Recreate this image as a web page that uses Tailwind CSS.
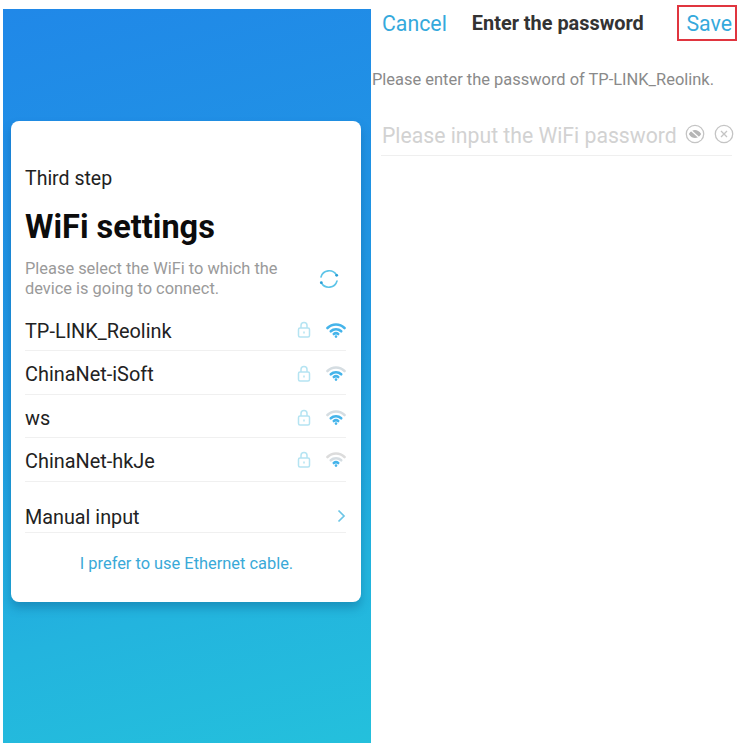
<!DOCTYPE html>
<html lang="en">
<head>
  <meta charset="UTF-8" />
  <meta name="viewport" content="width=device-width, initial-scale=1.0"/>
  <title>WiFi settings</title>
  <script src="https://cdn.jsdelivr.net/npm/@tailwindcss/browser@4"></script>
</head>
<body class="bg-white w-[743px] h-[746px] overflow-hidden font-['Roboto',sans-serif]">
  <div class="flex h-full">
    <!-- left phone -->
    <div class="ml-[3px] mt-[9px] mb-[3px] w-[368px] bg-[linear-gradient(165deg,#2088e8_0%,#2199e2_48%,#23b4de_78%,#24c0dc_100%)] pt-[112px] pl-[8px] pr-[10px]">
      <div class="bg-white rounded-[8px] h-[481px] pl-[14px] pr-[15px] pt-[46px] shadow-[0_6px_10px_rgba(10,80,130,0.35)]">
        <p class="text-[19.5px] leading-[24px] text-[#222]">Third step</p>
        <h1 class="mt-[18px] text-[32.5px] leading-[36px] font-bold text-[#0c0c0c]">WiFi settings</h1>
        <div class="mt-[14px] flex items-center justify-between pr-[6px]">
          <p class="text-[16.4px] leading-[20px] text-[#9a9a9a] w-[270px]">Please select the WiFi to which the device is going to connect.</p>
          <svg class="w-[22px] h-[22px]" viewBox="0 0 22 22" fill="none" stroke="#5cc4e8" stroke-width="1.6" stroke-linecap="round">
            <path d="M3 9a8.5 8.5 0 0 1 15.5-2"/>
            <path d="M19 13a8.5 8.5 0 0 1-15.5 2"/>
            <circle cx="18.7" cy="7.3" r="1.4" fill="#2a9fd6" stroke="none"/>
            <circle cx="3.3" cy="14.7" r="1.4" fill="#2a9fd6" stroke="none"/>
          </svg>
        </div>
        <div class="mt-[8px]">
          <div class="flex items-center justify-between h-[44px] pt-[3px] border-b border-[#f0f0f0]">
            <span class="pt-[4px] text-[19.9px] text-[#222]">TP-LINK_Reolink</span>
            <div class="flex items-center gap-[15px]">
              <svg class="w-[14px] h-[17px] mb-[2px]" viewBox="0 0 14 17" fill="none" stroke="#b5e4f2" stroke-width="1.5"><rect x="1.5" y="7" width="11" height="9" rx="1.5"/><path d="M4 7V4.5a3 3 0 0 1 6 0V7"/><path d="M7 10.5v2"/></svg>
              <svg class="w-[20px] h-[15px]" viewBox="0 0 20 15" fill="none" stroke-width="2.6" stroke-linecap="round"><path d="M1.5 5a12 12 0 0 1 17 0" stroke="#45b4ea"/><path d="M4.8 8.3a7.5 7.5 0 0 1 10.4 0" stroke="#45b4ea"/><path d="M7.8 11a3.5 3.5 0 0 1 4.4 0" stroke="#45b4ea"/><circle cx="10" cy="13.6" r="1.3" fill="#45b4ea"/></svg>
            </div>
          </div>
          <div class="flex items-center justify-between h-[44px] pt-[2px] border-b border-[#f0f0f0]">
            <span class="pt-[2px] text-[19.9px] text-[#222]">ChinaNet-iSoft</span>
            <div class="flex items-center gap-[15px]">
              <svg class="w-[14px] h-[17px]" viewBox="0 0 14 17" fill="none" stroke="#b5e4f2" stroke-width="1.5"><rect x="1.5" y="7" width="11" height="9" rx="1.5"/><path d="M4 7V4.5a3 3 0 0 1 6 0V7"/><path d="M7 10.5v2"/></svg>
              <svg class="w-[20px] h-[15px]" viewBox="0 0 20 15" fill="none" stroke-width="2.6" stroke-linecap="round"><path d="M1.5 5a12 12 0 0 1 17 0" stroke="#d5dde2"/><path d="M4.8 8.3a7.5 7.5 0 0 1 10.4 0" stroke="#45b4ea"/><path d="M7.8 11a3.5 3.5 0 0 1 4.4 0" stroke="#45b4ea"/><circle cx="10" cy="13.6" r="1.3" fill="#45b4ea"/></svg>
            </div>
          </div>
          <div class="flex items-center justify-between h-[43px] pt-[2px] border-b border-[#f0f0f0]">
            <span class="pt-[4px] text-[19.9px] text-[#222]">ws</span>
            <div class="flex items-center gap-[15px]">
              <svg class="w-[14px] h-[17px]" viewBox="0 0 14 17" fill="none" stroke="#b5e4f2" stroke-width="1.5"><rect x="1.5" y="7" width="11" height="9" rx="1.5"/><path d="M4 7V4.5a3 3 0 0 1 6 0V7"/><path d="M7 10.5v2"/></svg>
              <svg class="w-[20px] h-[15px]" viewBox="0 0 20 15" fill="none" stroke-width="2.6" stroke-linecap="round"><path d="M1.5 5a12 12 0 0 1 17 0" stroke="#d5dde2"/><path d="M4.8 8.3a7.5 7.5 0 0 1 10.4 0" stroke="#45b4ea"/><path d="M7.8 11a3.5 3.5 0 0 1 4.4 0" stroke="#45b4ea"/><circle cx="10" cy="13.6" r="1.3" fill="#45b4ea"/></svg>
            </div>
          </div>
          <div class="flex items-center justify-between h-[44px] border-b border-[#f0f0f0]">
            <span class="pt-[4px] text-[19.9px] text-[#222]">ChinaNet-hkJe</span>
            <div class="flex items-center gap-[15px]">
              <svg class="w-[14px] h-[17px]" viewBox="0 0 14 17" fill="none" stroke="#b5e4f2" stroke-width="1.5"><rect x="1.5" y="7" width="11" height="9" rx="1.5"/><path d="M4 7V4.5a3 3 0 0 1 6 0V7"/><path d="M7 10.5v2"/></svg>
              <svg class="w-[20px] h-[15px]" viewBox="0 0 20 15" fill="none" stroke-width="2.6" stroke-linecap="round"><path d="M1.5 5a12 12 0 0 1 17 0" stroke="#dcdcdc"/><path d="M4.8 8.3a7.5 7.5 0 0 1 10.4 0" stroke="#d5dde2"/><path d="M7.8 11a3.5 3.5 0 0 1 4.4 0" stroke="#45b4ea"/><circle cx="10" cy="13.6" r="1.3" fill="#45b4ea"/></svg>
            </div>
          </div>
          <div class="mt-[15px] flex items-center justify-between h-[36px] border-b border-[#f0f0f0]">
            <span class="pt-[6px] text-[19.8px] text-[#222]">Manual input</span>
            <svg class="w-[9px] h-[14px] mt-[2px]" viewBox="0 0 9 14" fill="none" stroke="#6cc5e6" stroke-width="1.7"><path d="M1.5 1.5L7 7l-5.5 5.5"/></svg>
          </div>
        </div>
        <p class="mt-[21px] pl-[2px] text-center text-[16.4px] leading-[20px] text-[#3aa9d8]">I prefer to use Ethernet cable.</p>
      </div>
    </div>

    <!-- right phone -->
    <div class="w-[372px]">
      <div class="flex items-center h-[36px] mt-[5px] pl-[11px] pr-[6px]">
        <span class="pt-[2px] text-[21.3px] text-[#35a9dc]">Cancel</span>
        <span class="pt-[1px] ml-[25px] text-[19.9px] font-bold text-[#333]">Enter the password</span>
        <span class="ml-auto text-[21.3px] text-[#35a9dc] border-2 border-[#e0353f] pl-[7px] pr-[3px] h-[36px] leading-[34px]">Save</span>
      </div>
      <p class="mt-[29px] ml-[1px] text-[16.46px] leading-[20px] text-[#8a8a8a] whitespace-nowrap">Please enter the password of TP-LINK_Reolink.</p>
      <div class="mt-[24px] ml-[10px] mr-[11px] h-[42px] pb-[2px] flex items-center justify-between border-b border-[#efefef]">
        <span class="pt-[4px] pl-[1px] text-[21.2px] text-[#d2d2d2] whitespace-nowrap">Please input the WiFi password</span>
        <div class="flex items-center gap-[9px] -mr-[2px]">
          <svg class="w-[20px] h-[20px]" viewBox="0 0 20 20" fill="none" stroke="#c4c4c4" stroke-width="1.3"><circle cx="10" cy="10" r="8.7"/><path d="M3.8 10c2-3 4-4 6.2-4s4.2 1 6.2 4c-2 3-4 4-6.2 4s-4.2-1-6.2-4z" fill="#b5b5b5" stroke="none"/><path d="M4 4.5l12 11" stroke="#fff" stroke-width="1.2"/></svg>
          <svg class="w-[20px] h-[20px]" viewBox="0 0 20 20" fill="none" stroke="#c4c4c4" stroke-width="1.3"><circle cx="10" cy="10" r="8.7"/><path d="M7 7l6 6M13 7l-6 6"/></svg>
        </div>
      </div>
    </div>
  </div>
</body>
</html>
